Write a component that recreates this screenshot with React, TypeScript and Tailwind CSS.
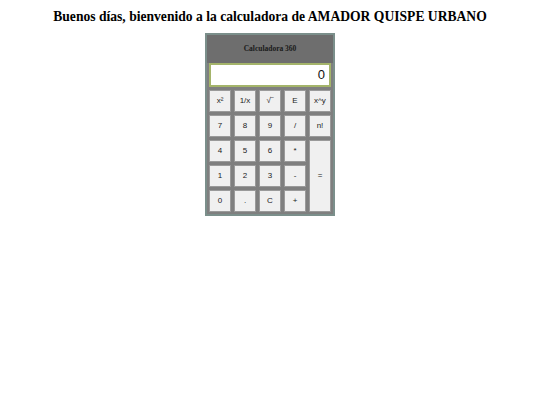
const keys: { label: string; tall?: boolean }[] = [
  { label: "x²" },
  { label: "1/x" },
  { label: "√‾" },
  { label: "E" },
  { label: "x^y" },
  { label: "7" },
  { label: "8" },
  { label: "9" },
  { label: "/" },
  { label: "n!" },
  { label: "4" },
  { label: "5" },
  { label: "6" },
  { label: "*" },
  { label: "=", tall: true },
  { label: "1" },
  { label: "2" },
  { label: "3" },
  { label: "-" },
  { label: "0" },
  { label: "." },
  { label: "C" },
  { label: "+" },
];

export default function App() {
  return (
    <div className="w-[540px] h-[405px] bg-white flex flex-col items-center">
      <h1 className="mt-[9px] text-[13.6px] leading-[15px] font-bold text-black font-['Liberation_Serif',serif]">
        Buenos días, bienvenido a la calculadora de AMADOR QUISPE URBANO
      </h1>

      <div className="mt-[9px] w-[130px] border-2 border-[#7b8f8b] bg-[#7f7f7f] flex flex-col">
        <div className="h-[28px] bg-[#6e6e6e] flex items-center justify-center">
          <span className="text-[7.5px] font-bold text-[#1a1a1a] font-['Liberation_Serif',serif]">
            Calculadora 360
          </span>
        </div>

        <div className="mx-[2px] h-[24px] bg-white border-2 border-[#a4b46a] flex items-center justify-end pr-[4px]">
          <span className="text-[13px] text-[#111] font-['Liberation_Sans',sans-serif]">0</span>
        </div>

        <div className="grid grid-cols-[repeat(5,22px)] auto-rows-[22px] gap-[3px] px-[2px] pt-[3px] pb-[2px]">
          {keys.map((k) => (
            <button
              key={k.label}
              className={`${k.tall ? "row-span-3" : ""} bg-[#f0f0f0] border border-[#9a9a9a] flex items-center justify-center text-[8px] text-[#222] font-['Liberation_Sans',sans-serif]`}
            >
              {k.label}
            </button>
          ))}
        </div>
      </div>
    </div>
  );
}
